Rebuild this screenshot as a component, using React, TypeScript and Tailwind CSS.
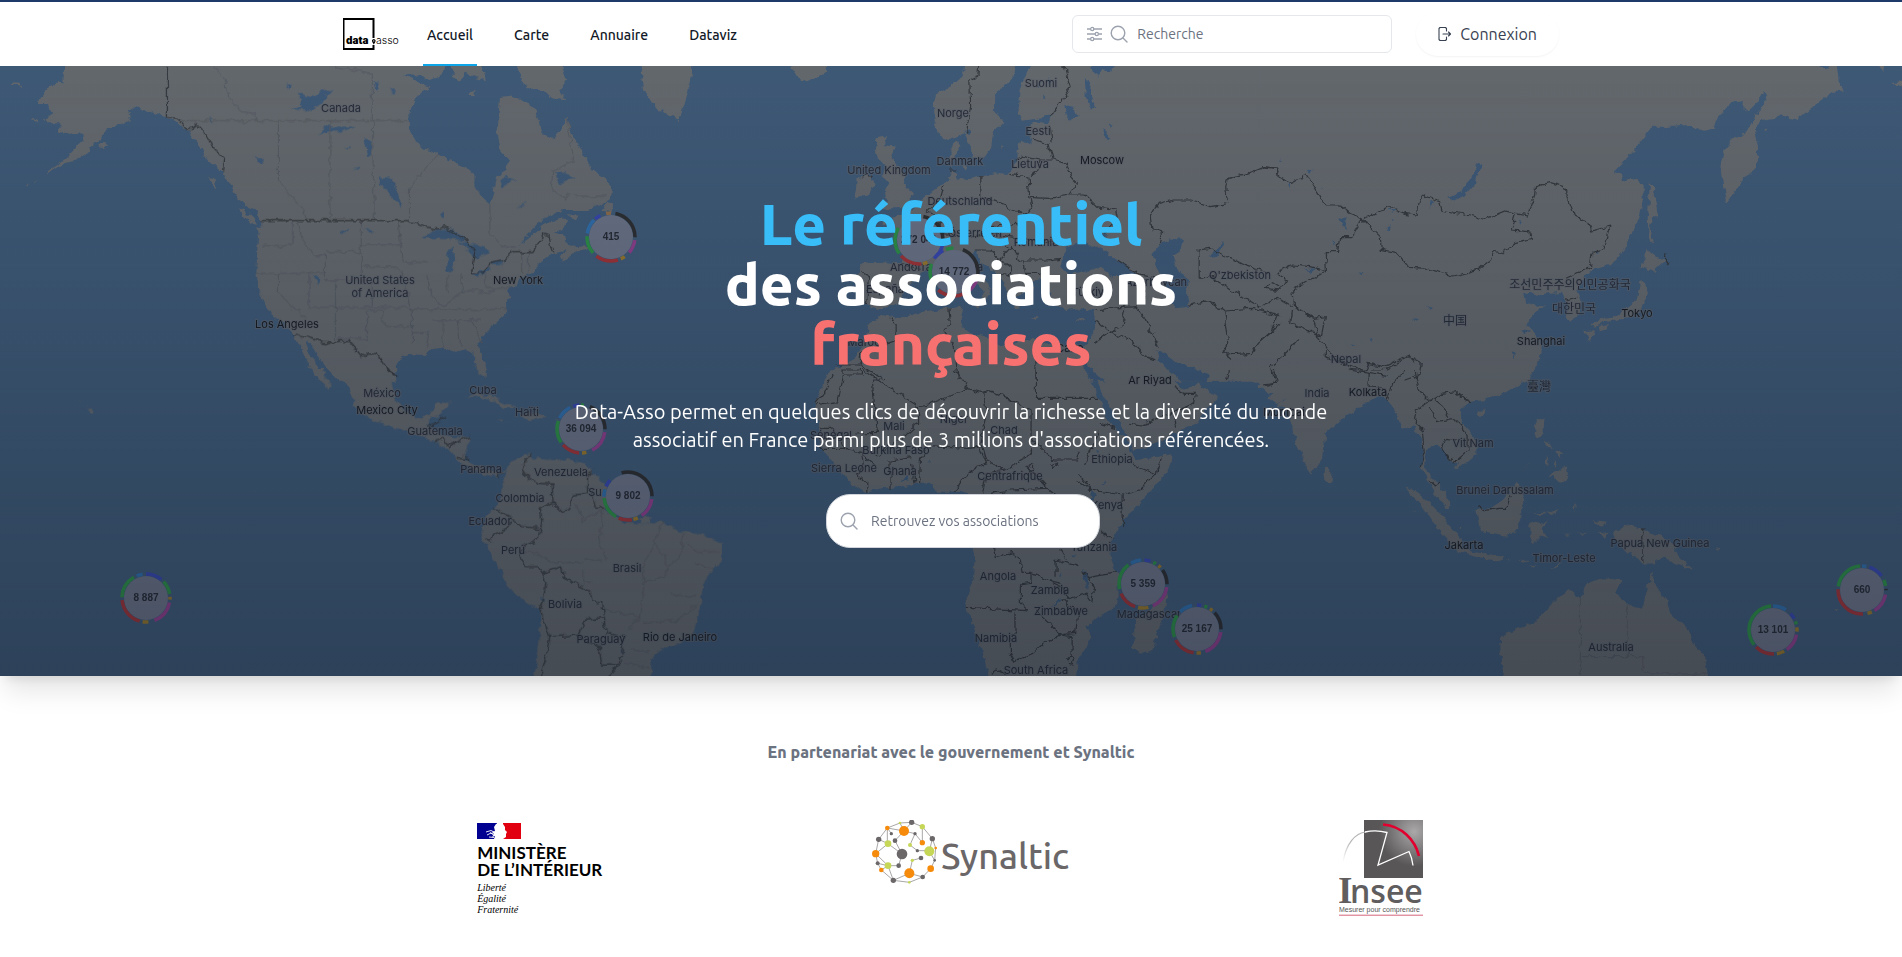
const HALO = "#5d636b";

type Tile = {
  transform: string;
  land: string;
  water?: string;
  borders: string;
  regions?: string;
};

const tiles: Tile[] = [
  {
    // North America
    transform: "translate(0 60) scale(.408163 .333333)",
    land:
      "M158,0 L155,70 140,68 118,85 98,110 93,135 115,135 128,160 105,178 120,190 145,190 148,218 165,215 182,222 200,213 205,240 185,265 165,290 150,305 135,318 115,335 108,340 118,338 140,320 160,310 190,300 215,280 222,260 250,235 262,205 285,195 300,195 318,180 315,155 330,140 345,145 370,155 400,172 420,178 440,195 460,215 475,240 495,270 510,300 530,320 545,335 550,350 560,370 575,400 590,425 610,445 630,455 640,480 640,500 628,500 632,530 630,580 628,640 635,690 650,730 670,770 700,800 720,825 735,860 750,900 765,930 780,965 L797,965 785,935 770,905 755,870 748,840 760,850 775,880 800,920 815,945 830,965 L970,965 965,930 975,900 1000,882 1040,885 1060,868 1090,860 1115,880 1140,868 1160,880 1165,905 1175,935 1190,955 1190,910 1178,880 1172,850 1190,820 1215,790 1240,760 1240,730 1250,715 1245,690 1265,680 1275,650 1305,640 1320,610 1350,580 1385,570 1375,590 1380,605 1400,585 1425,572 1440,565 1440,555 1400,560 1385,545 1380,520 1360,515 1385,500 1390,480 1370,478 1330,495 1300,530 1270,560 1290,530 1320,490 1350,465 1380,450 1440,450 1480,430 1500,410 1502,380 1480,350 1450,330 1420,260 1400,220 1390,175 1375,200 1360,230 1340,235 1325,215 1320,180 1310,150 1290,125 1250,108 1225,110 1222,160 1218,230 1225,270 1245,300 1240,330 1215,350 1210,390 1200,430 1180,410 1165,380 1165,345 1140,320 1100,300 1060,270 1030,265 1005,215 1003,160 1015,120 1035,95 1055,80 1030,70 990,45 1010,40 1050,60 1080,50 1100,0 Z M1255,0 L1275,50 1300,90 1330,90 1350,115 1385,120 1370,90 1390,60 1370,0 Z M1105,0 L1110,50 1125,65 1140,40 1165,55 1190,60 1180,0Z M1145,105 L1155,92 1165,90 1160,105Z M1475,448 L1490,425 1502,430 1495,455Z M1390,462 L1420,468 1410,478Z M20,65 L45,68 52,82 38,75Z M240,258 L255,245 265,258 250,268Z M80,178 L95,178 90,187Z M62,375 L70,370 68,378Z M82,362 L88,358 86,366Z M515,352 L525,355 530,385 520,375Z M583,445 L600,450 622,478 630,495 615,490 595,465Z",
    water:
      "M1035,535 L1060,510 1100,505 1130,525 1140,545 1110,540 1070,535Z M1097,570 L1112,560 1115,600 1105,640 1092,630Z M1120,545 L1150,550 1190,560 1200,580 1175,590 1165,600 1150,570Z M1155,645 L1180,630 1205,618 1200,632 1170,650Z M1200,605 L1240,598 1230,612 1205,612Z M930,350 L960,355 975,400 985,445 965,420 945,385 930,375Z M715,150 L740,140 730,98 760,115 785,90 820,90 800,110 785,130 750,155Z M700,65 L715,75 710,88Z M780,225 L800,200 870,200 840,215 805,215Z M890,235 L910,240 912,280 900,290Z M915,70 L930,72 922,95Z M955,85 L970,95 965,105Z M620,285 L635,300 650,300 640,318 628,300Z M510,170 L525,190 515,185Z M845,265 L860,258 855,265Z M870,325 L882,320 876,332Z M768,648 L782,655 780,675Z M1225,365 L1240,350 1262,362 1245,370 1232,382Z M1268,445 L1288,425 1280,440Z M1075,460 L1090,452 1088,475Z M1360,340 L1380,335 1410,352 1385,365 1370,370Z M835,518 L852,505 855,510 838,522Z M890,505 L920,515 905,517Z M1005,310 L1012,330Z",
    borders:
      "M410,0 V172 L437,175 460,215 482,190 500,215 525,265 550,295 548,335 M640,482 H1000 L1010,490 1040,500 1070,507 1090,500 1140,540 1165,575 1162,600 1155,640 1180,640 1205,605 1235,600 1258,575 1305,575 1325,540 1330,520 1345,525 1350,560 1357,573 M718,826 L740,826 795,848 830,848 835,842 855,842 880,880 895,890 905,878 925,882 945,920 955,938 970,945",
    regions:
      "M440,182 H1003 M682,182 V365 L745,450 750,480 M808,182 V482 M912,40 V182 L917,482 M820,20 L912,40 M525,18 L550,50 560,110 590,155 625,160 630,182 M1075,280 L1003,385 V482 M1200,430 V520 L1225,555 1265,562 M718,482 V550 L690,560 640,555 M730,482 L740,540 770,585 797,585 V660 M797,575 H885 M885,482 V640 M885,555 H980 M975,482 L985,605 1045,608 M628,640 H797 M682,640 V700 L748,775 M757,640 V740 M757,742 H1005 M822,660 V842 M797,660 H912 V740 M898,750 V835 H830 M898,750 H938 V795 L1005,802 M885,617 L975,622 985,640 M1005,750 H1070 L1240,748 M1010,818 H1050 L1045,860 M1060,780 H1175 M1085,782 V862 M1120,782 L1128,855 M1155,780 L1180,850 M1097,645 V700 M1132,645 V700 M1190,640 V685 H1255 M985,640 L1010,750 1010,850 M1045,640 L1055,700 1085,740 M1355,330 L1350,390 1385,415 1395,400 M1403,408 H1487 M1390,180 L1400,260 1405,300 1355,335 M1278,575 V640 M1295,575 V640 M1130,700 L1160,690 1190,700 1215,690 M1085,740 L1130,700",
  },
  {
    // Central and South America
    transform: "translate(0 370) scale(.471939 .333333)",
    land:
      "M707,-5 L735,50 750,90 755,125 790,150 830,170 865,185 895,200 930,220 955,245 970,275 990,290 1005,300 1030,318 1055,320 1075,300 1065,330 1065,360 1060,395 1045,420 1030,440 1020,500 1040,560 1060,600 1075,650 1100,680 1145,720 1145,780 1140,850 1130,935 L1380,935 1380,870 1395,840 1440,820 1470,790 1478,740 1485,700 1490,640 1510,600 1530,570 1530,520 1510,510 1480,490 1440,480 1420,470 1400,455 1370,465 1350,460 1320,455 1280,420 1290,400 1285,345 1250,300 1240,280 1200,270 1170,270 1130,265 1125,250 1100,265 1085,275 1070,300 1055,310 1030,295 1000,280 985,265 990,235 995,200 960,205 930,190 920,180 905,165 915,140 930,135 950,110 955,95 925,95 912,135 880,145 855,120 840,90 830,40 840,-5 Z M665,-5 L680,30 700,62 705,55 690,20 685,-5Z M985,78 L1010,70 1050,85 1095,112 1070,115 1050,95 1010,80Z M1100,130 L1130,128 1160,142 1120,150Z M1055,146 L1068,147 1062,151Z M1175,146 L1190,148 1180,150Z M1012,-5 L1030,-5 1025,25 1015,15Z M190,118 L200,122 197,131 190,130Z M185,103 l4,2 -2,3Z M168,90 l3,2 -2,2Z M1355,445 L1380,442 1375,462 1360,465Z",
    water: "M1140,682 L1156,690 1150,698Z M1314,838 L1320,840 1318,852Z",
    borders:
      "M818,-5 L835,15 842,15 M905,165 L930,160 932,140 945,145 M920,215 L940,205 950,225 995,200 M950,235 L968,215 M968,262 L992,265 M1055,320 L1062,310 M1127,250 L1105,290 1120,325 1140,340 1170,342 1172,400 1190,425 1205,415 1215,375 1245,370 1245,320 1255,305 M1172,400 L1145,415 1148,450 1143,505 M1045,415 L1080,440 1105,470 1143,475 M1085,455 L1070,480 1045,495 1040,515 1028,505 M1143,505 L1110,530 1100,560 1115,590 1140,590 1150,610 1190,590 M1150,610 L1157,640 1150,700 1145,720 1165,800 1155,870 1145,918 M1190,590 L1195,625 1250,660 1255,695 1275,700 1280,745 1240,750 1225,795 1170,800 M1225,800 L1270,835 1275,885 1305,885 1320,855 M1280,745 L1285,790 1320,800 1318,850 M1320,870 L1290,918 M1255,360 L1260,410 1280,415",
    regions:
      "M1220,400 L1235,455 1260,430 1275,420 1270,520 1285,570 M1110,540 L1180,580 1230,575 M1235,600 V640 H1255 M1275,570 H1235 M1385,520 L1360,600 1365,640 M1405,455 L1385,520 1410,560 1410,620 1365,640 M1450,490 L1440,560 1410,600 M1365,640 L1355,740 1280,720 M1355,740 L1330,780 M1480,545 H1525 M1475,580 L1510,600 M1455,520 L1490,560 M1365,760 L1440,750 1475,700 M1420,670 L1475,680 M1335,840 L1380,845 M1325,880 L1375,890",
  },
  {
    // Europe, North Africa and western Asia
    transform: "translate(640 60) scale(.408163 .333333)",
    land:
      "M0,0 L130,0 125,60 110,130 95,183 70,165 35,140 10,90Z M370,0 L465,0 455,38 410,68 385,50 375,30Z M925,0 L915,50 890,75 870,110 870,150 890,190 865,220 860,265 845,290 820,295 805,250 795,215 785,230 755,240 730,225 722,190 720,130 725,100 760,80 790,50 800,0 Z M960,0 L930,90 925,150 935,182 985,175 1010,165 1000,190 970,185 950,195 955,230 960,255 935,240 925,270 925,300 900,345 870,340 835,345 800,360 775,355 765,330 770,290 785,260 775,240 760,270 762,300 765,330 755,360 735,375 710,400 690,420 665,450 640,465 600,480 590,490 620,500 640,530 650,570 640,610 580,605 540,610 535,650 530,700 550,730 580,750 610,740 640,715 650,685 680,650 700,630 735,612 765,605 790,625 815,660 845,690 840,710 820,735 830,745 850,715 860,700 855,680 870,690 840,660 815,620 805,590 825,570 830,600 850,620 880,650 895,680 905,715 920,745 930,740 925,710 945,690 965,690 960,665 975,655 1000,670 1005,700 1010,730 1040,750 1080,745 1110,750 1115,780 1110,820 1095,850 1080,870 1050,860 1000,855 960,840 930,835 915,860 880,855 850,830 810,820 790,800 785,770 790,740 750,745 690,755 640,775 590,765 560,800 545,860 520,900 490,920 470,940 455,965 L1580,965 1580,0Z M580,235 L605,228 600,255 625,260 615,290 640,330 650,375 668,400 660,430 630,445 590,445 605,420 600,400 610,370 595,350 600,320 585,300 575,270Z M530,355 L565,345 572,375 560,405 525,418 530,385Z M745,650 L755,650 752,700 742,700Z M955,772 L980,772 970,780Z M1065,778 L1090,776 1080,785Z M790,312 L802,318 798,330Z M885,255 L892,262 886,268Z",
    water:
      "M1035,590 L1050,560 1085,545 1110,560 1130,560 1150,590 1185,610 1215,640 1210,655 1160,650 1120,620 1080,640 1050,645 1030,620 Z M1115,535 L1145,515 1142,535 1125,545Z M1255,580 L1275,550 1300,535 1330,540 1325,570 1305,585 1310,610 1320,635 1345,660 1340,700 1345,740 1310,745 1290,720 1295,690 1275,650 1262,610Z M1395,595 L1415,560 1430,545 1425,560 1412,590Z M1085,880 L1100,920 1140,965 1110,965 1090,930Z M1265,870 L1290,885 1310,905 1360,925 1395,945 1390,965 1330,965 1300,940 1275,905Z M1040,135 L1062,140 1072,170 1058,182 1042,160Z M1090,55 L1105,70 1102,100 1115,140 1105,152 1092,110Z M1100,0 L1170,0 1150,35 1135,30 1125,50 1110,38Z M1130,208 L1145,215 1150,238 1138,235Z M975,65 L982,80 976,88Z M1000,50 L1008,70 1002,75Z M985,100 L992,110 986,118Z M1150,190 l8,5 -5,5Z M795,210 L808,205 805,225Z",
    borders:
      "M830,0 L828,50 808,60 810,140 800,215 M1035,0 L1055,85 1005,170 M960,240 L1000,255 1010,300 M1005,200 L1010,250 M915,300 L940,290 980,300 1010,300 1045,310 1055,350 1070,370 1050,405 1000,415 955,412 950,350 905,343 M980,300 L975,330 955,350 M835,345 L835,410 870,425 920,450 950,465 M955,412 L960,440 945,465 M1050,405 L1090,405 1120,440 1165,450 1170,480 1140,520 M745,375 L735,420 705,455 L740,480 735,520 700,560 M740,520 L800,530 860,520 930,535 1010,545 M860,500 L920,490 940,520 M820,570 L860,570 880,600 910,620 900,650 M880,600 L910,560 930,600 1000,600 1030,595 M940,600 L945,640 1000,640 M870,540 L900,560 M890,640 L930,655 M545,640 L560,650 555,735 M640,610 L690,625 M545,352 L555,345 568,352 M760,330 H775 M610,775 L630,790 630,840 560,870 540,880 V915 H480 M495,945 V930 H540 M540,915 L600,960 M757,745 L760,790 745,815 770,860 780,960 M970,860 V960 M1115,750 L1150,745 1215,740 1235,770 1270,860 M1115,780 L1150,815 1110,850 M1150,815 L1200,840 1240,890 1265,900 M1190,745 L1180,800 1150,815 M1215,640 L1240,680 1230,730 M1345,735 L1390,725 1430,750 1435,800 1440,850 1430,880 1450,900 M1435,885 L1500,880 1515,850 1568,790 M1430,750 L1500,745 1568,770 M1568,350 L1560,325 1530,320 1490,340 1440,355 1435,380 1440,430 1400,440 1350,420 1310,420 1270,430 1250,470 1255,510 1280,520 1275,550 M1370,655 V570 L1395,565 1440,590 1490,620 1540,640 M1370,655 L1400,650 1450,690 1520,740 M1170,600 L1220,640 1300,660 M1530,680 L1550,665 1568,680 M1540,690 H1568",
  },
  {
    // Eastern Asia
    transform: "translate(1262 60) scale(.408163 .333333)",
    land:
      "M-5,0 L1410,0 1415,60 1425,95 1400,95 1370,120 1330,160 1310,180 1280,165 1250,175 1225,180 1205,210 1215,260 1215,295 1200,340 1180,350 1170,380 1155,400 1137,430 1130,380 1123,320 1130,280 1145,245 1180,225 1200,190 1215,155 1240,105 1230,95 1218,125 1190,158 1180,150 1180,120 1150,125 1130,155 1105,190 1110,208 1080,212 1040,195 1010,200 960,200 940,220 915,265 890,300 862,335 880,345 885,365 910,355 935,375 935,410 925,470 900,535 880,580 850,615 825,620 800,635 785,660 770,690 780,720 775,770 755,785 745,770 750,740 740,715 735,695 700,700 670,705 640,700 645,725 665,735 695,740 670,755 655,780 650,795 670,825 685,850 685,875 675,910 650,965 L-5,965Z M950,370 L960,380 965,430 972,475 955,475 950,505 962,545 948,545 945,480 948,420Z M945,570 L965,590 990,600 960,635 930,620 925,635 935,600Z M930,660 L942,670 945,705 930,740 920,760 905,770 880,775 845,785 815,800 805,795 830,775 870,768 895,745 920,720 925,690Z M790,810 L815,808 815,825 800,848Z M825,800 L850,795 845,808 828,815Z M1500,0 L1525,0 1522,34Z M1540,65 L1568,65 1568,82 1555,72Z M1228,212 l8,-4 -4,12Z",
    water:
      "M530,305 L538,325 520,370 495,405 470,422 457,415 490,395 515,350Z M110,330 L125,328 118,342Z M190,480 L205,468 200,490 210,510 195,500Z M105,628 L130,625 122,637Z M410,420 L418,422 414,445Z M310,450 l14,0 -4,8Z M625,488 L638,478 630,494Z M305,505 l12,-6 -8,14Z M318,474 l8,3 -6,6Z M170,540 L182,552 175,555Z M405,738 L418,745 412,750Z M238,637 l8,3 -5,6Z M370,778 l12,2 -6,5Z M280,665 l6,10Z M820,572 l8,6 -8,4Z M638,810 L655,815 645,822Z M262,838 l10,4 -6,4Z M220,853 l8,3 -6,5Z M612,870 L622,880 616,895Z M62,372 l8,0 -4,8Z M45,295 l5,3 -4,5Z M145,380 l7,3 -5,5Z M1365,20 L1395,18 1380,28Z",
    borders:
      "M0,320 L35,325 40,350 75,370 110,345 130,385 155,435 190,435 215,460 245,478 220,530 190,530 185,575 155,575 158,635 110,665 75,690 80,740 130,775 155,770 145,830 70,790 75,750 M245,478 L310,440 350,460 380,465 385,425 395,405 435,425 440,450 510,465 545,478 595,453 650,468 668,405 670,380 705,368 740,380 765,465 800,490 808,513 852,498 835,570 808,580 805,620 745,655 M245,478 L290,530 292,568 330,578 362,625 410,628 470,648 530,628 560,600 565,575 590,578 620,548 660,535 655,515 610,510 620,465 M745,720 L770,712 M80,740 L100,755 125,775 138,830 160,870 200,910 250,935 260,910 300,920 360,885 375,910 M155,870 L155,890 250,935 M265,930 L300,930 360,890 390,910 385,945 350,960 M90,835 L60,880 20,920 30,960 M0,735 L40,715 75,740 M35,640 L75,615 120,620 155,632 M35,640 L60,660 45,690 5,685 M40,760 L20,820 0,840 M990,578 L988,600 998,615",
  },
  {
    // Africa and the Arabian peninsula
    transform: "translate(740 370) scale(.357143 .333333)",
    land:
      "M255,-5 L230,50 210,100 220,150 222,200 230,235 270,290 310,340 350,368 400,358 450,350 500,340 530,335 550,365 590,365 620,362 640,372 650,420 640,480 650,530 660,570 655,620 635,680 635,720 660,780 680,850 700,935 L940,935 945,880 970,830 985,800 970,770 1000,740 1050,710 1060,680 1060,620 1040,570 1035,520 1060,470 1100,420 1150,360 1190,310 1210,270 1210,250 1150,265 1110,270 1095,245 1070,200 1030,150 1010,100 990,50 960,-5Z M978,-5 L1005,50 1045,130 1075,180 1098,240 1130,235 1180,210 1230,180 1280,160 1310,110 1338,80 1310,60 1285,40 1250,60 1220,40 1195,-5Z M1225,-5 L1255,22 1285,30 1295,15 1305,35 1340,35 1390,30 1440,25 1480,70 1530,90 1500,110 1530,115 1580,150 1580,-5Z M1195,670 L1190,720 1170,790 1155,840 1125,852 1100,830 1105,780 1110,750 1150,720 1180,680Z",
    water:
      "M985,360 L998,375 990,395 978,380Z M965,595 L975,640 972,660 962,625Z M870,710 L890,690 905,688 880,708Z M1000,240 l10,2 -6,8Z M1015,340 l6,-8 2,6Z M455,325 L468,318 475,335 462,332Z M526,270 l6,0 -3,8Z M895,610 l8,2 -4,8Z M930,555 l8,4 -4,4Z",
    borders:
      "M340,0 V15 H290 L275,95 210,105 M260,10 L240,60 210,100 M370,30 L385,190 320,192 M370,30 H395 M345,0 L500,110 525,105 640,55 600,0 M500,110 V160 L460,200 M640,55 L680,70 700,62 815,120 V200 M830,0 V85 H1005 M525,230 L640,235 680,230 M680,70 L690,130 670,230 690,280 650,300 620,330 600,365 M680,230 L690,270 740,300 800,265 830,220 815,200 M830,220 L880,270 940,270 950,245 M680,365 L690,310 740,300 M700,370 L760,360 860,355 800,285 M860,355 L880,372 M950,310 L985,360 1070,375 1120,360 1165,312 1180,260 M985,360 L940,330 M1070,375 V440 L1075,465 M1100,285 L1165,312 M1010,480 L1040,510 M1005,160 L1050,175 M965,285 L980,250 1005,180 M220,175 H250 L270,190 290,235 340,250 380,285 M222,235 H300 M222,205 H265 M340,250 L345,280 330,320 M355,368 V340 L325,310 M420,360 V270 L480,260 M490,340 L480,275 M503,340 L505,270 525,230 M380,260 L420,230 460,200 M710,535 L715,560 760,548 785,570 790,610 815,610 860,630 900,640 M815,610 V640 L785,645 V700 L810,725 M635,712 L810,722 M770,730 V790 L757,800 V850 L770,875 820,850 850,820 895,795 930,800 V860 M895,795 L870,765 830,725 M895,795 L940,790 945,730 905,690 965,670 985,700 990,650 960,600 M860,630 L900,650 920,690 M885,570 L950,590 M885,570 V620 M975,620 L1055,605 M895,535 L915,570 M915,870 L925,858 937,868 930,882 918,880 M705,910 L720,900 740,912 M1215,50 L1245,70 1275,70 1270,100 1210,130 1220,170 M1090,160 L1120,165 1210,130 M1365,30 L1370,0 M1470,50 L1500,40 1490,0 M810,290 L820,285 825,298 812,300Z M870,285 L885,278 890,290 875,292Z",
  },
  {
    // Southern Asia and Oceania
    transform: "translate(1262 370) scale(.408163 .333333)",
    land:
      "M-10,-5 L-10,50 25,70 15,85 40,105 60,85 65,130 80,200 100,270 120,307 135,290 150,265 155,190 190,150 240,110 280,80 300,80 320,110 335,150 345,180 370,165 385,190 400,240 390,290 400,320 415,345 425,375 450,410 460,415 450,370 430,340 405,310 400,280 405,235 425,225 445,240 460,270 480,280 475,297 510,270 525,255 525,220 510,185 485,155 485,120 510,95 545,90 590,72 620,50 650,35 660,-5Z M155,290 L172,310 170,340 152,338Z M350,352 L385,370 420,410 450,450 485,500 490,540 460,520 430,480 405,430 370,380Z M470,525 L520,545 590,560 590,570 530,562 480,545Z M600,570 L612,570 608,575Z M620,572 L655,572 645,578Z M658,585 L670,590 664,596Z M710,598 L735,580 728,592Z M525,420 L560,415 590,390 625,335 640,360 645,400 630,440 630,480 600,497 545,485 530,455Z M665,430 L700,428 725,418 720,430 680,435Z M655,455 L680,462 700,450 685,475 700,505 680,495 665,522 655,490Z M675,145 L692,145 690,185 680,210 665,190Z M745,290 L748,325 730,342 715,320 700,320 730,300Z M690,215 L705,218 712,235 700,228Z M720,240 L735,250 730,262Z M695,260 L702,275 697,290Z M715,270 L722,285 715,290Z M640,298 L660,272 655,280Z M530,120 L548,118 540,140 525,140Z M860,490 L895,465 930,475 980,500 1020,530 1010,545 1055,600 1020,585 985,560 960,580 930,582 905,545 895,555 880,520 865,510Z M810,450 L845,455 830,470Z M765,410 L772,402 768,430Z M740,490 L755,492 745,494Z M775,488 L800,488 790,492Z M825,485 L850,490 835,500Z M583,800 L600,790 670,755 700,715 725,685 755,660 780,685 795,640 835,625 880,630 865,670 900,705 930,720 945,660 953,607 970,660 990,690 1000,730 1040,775 1055,820 1085,860 1095,935 L598,935 585,850Z M1112,528 L1124,542 1118,540Z M1400,720 l14,-3 -4,9 -8,0Z M375,418 l5,4 -4,2Z M480,465 l8,10 -4,4Z M662,40 L672,38 668,62 660,68Z",
    borders:
      "M0,45 L38,40 30,0 M310,90 L320,40 350,0 M375,0 L385,60 410,95 380,120 375,160 395,180 400,250 390,290 M410,95 L440,70 475,65 495,85 510,95 M410,110 L430,155 470,145 485,165 505,200 505,240 470,275 M440,230 L450,205 480,210 M440,230 L445,250 465,270 M420,85 L445,110 460,140 M410,330 L425,348 435,335 M530,408 L545,422 580,415 600,415 608,375 M933,475 V580 M215,0 L260,10 V50 L300,55 M260,10 L310,20 M300,55 L310,95",
    regions: "M780,685 V918 M895,705 V860 M780,860 H933 V912 H1090",
  },
];

type Label = [text: string, x: number, y: number, strong?: boolean];

const labels: Label[] = [
  ["Canada", 341, 108], ["United States", 380, 280], ["of America", 380, 293],
  ["New York", 518, 280, true], ["Los Angeles", 287, 324, true],
  ["México", 382, 393], ["Mexico City", 387, 410, true], ["Cuba", 483, 390],
  ["Haïti", 527, 412], ["Guatemala", 435, 431], ["Panama", 481, 469],
  ["Venezuela", 561, 472], ["Su", 595, 492], ["Colombia", 520, 498],
  ["Ecuador", 490, 521], ["Perú", 513, 550], ["Brasil", 627, 568],
  ["Bolivia", 565, 604], ["Paraguay", 601, 639], ["Rio de Janeiro", 680, 637, true],
  ["Suomi", 1041, 83], ["Norge", 953, 113], ["Eesti", 1038, 131],
  ["Danmark", 960, 161], ["United Kingdom", 889, 170], ["Lietuva", 1030, 164],
  ["Moscow", 1102, 160, true], ["Deutschland", 960, 201], ["Österreich", 975, 233],
  ["România", 1036, 242], ["Andorra", 911, 267], ["Italia", 971, 267],
  ["España", 885, 289], ["Maroc", 864, 342], ["O'zbekiston", 1240, 275],
  ["Azerbaycan", 1156, 282], ["Türkiye", 1091, 292], ["Cairo", 1070, 348, true],
  ["Nepal", 1346, 359], ["Tokyo", 1637, 313, true], ["Shanghai", 1541, 341, true],
  ["Ar Riyad", 1150, 380, true], ["Mali", 894, 426], ["Niger", 954, 419],
  ["Chad", 1004, 430], ["Sénégal", 831, 435], ["Burkina Faso", 896, 450],
  ["Ethiopia", 1112, 459], ["Sierra Leone", 844, 468], ["Ghana", 900, 471],
  ["Centrafrique", 1010, 476], ["Kenya", 1107, 505], ["Tanzania", 1094, 547],
  ["Angola", 998, 576], ["Zambia", 1050, 590], ["Zimbabwe", 1061, 611],
  ["Madagascar", 1149, 614], ["Namibia", 996, 638], ["South Africa", 1036, 670],
  ["Mumbai", 1284, 412, true], ["India", 1317, 393], ["Kolkata", 1368, 392, true],
  ["Vit Nam", 1473, 443], ["Brunei Darussalam", 1505, 490],
  ["Jakarta", 1464, 545, true], ["Timor-Leste", 1564, 558],
  ["Papua New Guinea", 1660, 543], ["Australia", 1611, 647],
];

const eastAsianLabels: Label[] = [
  ["中国", 1455, 321],
  ["조선민주주의인민공화국", 1570, 285],
  ["대한민국", 1574, 309],
  ["臺灣", 1539, 387],
];

const DARK = "#2c2e31";
const PINK = "#8c3f8a";
const GOLD = "#94762c";
const RED = "#9c3338";
const GREEN = "#2c8c46";
const SKY = "#2f6ca8";
const NAVY = "#3646ac";

type Cluster = { count: string; x: number; y: number; ring: [number, number, string][] };

const clusters: Cluster[] = [
  { count: "272 041", x: 919, y: 240, ring: [[3, 24, DARK], [26, 36, NAVY], [44, 47, GOLD], [48, 63, RED], [65, 83, GREEN]] },
  { count: "14 772", x: 954, y: 272, ring: [[6, 27, DARK], [29, 40, PINK], [43, 61, RED], [64, 80, GREEN], [84, 92, NAVY], [94, 99, GREEN]] },
  { count: "415", x: 611, y: 237, ring: [[3, 25, DARK], [27, 36, PINK], [40, 43, GOLD], [45, 60, RED], [63, 75, GREEN], [77, 87, SKY], [88, 92, NAVY], [96, 100, "#8a6a4a"]] },
  { count: "36 094", x: 581, y: 429, ring: [[6, 25, DARK], [27, 42, PINK], [46, 49, GOLD], [51, 63, RED], [65, 80, GREEN], [82, 92, SKY], [94, 98, NAVY], [0, 2, GREEN]] },
  { count: "9 802", x: 628, y: 496, ring: [[-5, 25, DARK], [27, 40, PINK], [43, 46, GOLD], [47, 56, RED], [58, 73, GREEN], [74, 79, SKY], [81, 86, NAVY]] },
  { count: "8 887", x: 146, y: 598, ring: [[0, 11, NAVY], [13, 22, GREEN], [24, 26, GOLD], [28, 44, PINK], [48, 52, GOLD], [54, 73, RED], [75, 91, GREEN], [93, 97, SKY]] },
  { count: "5 359", x: 1143, y: 584, ring: [[1, 5, NAVY], [7, 9, GREEN], [11, 13, GOLD], [15, 25, DARK], [27, 43, PINK], [46, 53, GOLD], [55, 68, RED], [71, 89, GREEN], [91, 98, SKY]] },
  { count: "25 167", x: 1197, y: 629, ring: [[0, 3, NAVY], [5, 7, GREEN], [9, 11, GOLD], [13, 25, DARK], [27, 44, PINK], [47, 50, GOLD], [52, 67, RED], [69, 84, GREEN], [87, 96, SKY]] },
  { count: "13 101", x: 1773, y: 630, ring: [[0, 9, SKY], [13, 17, NAVY], [19, 21, GREEN], [23, 26, GOLD], [28, 40, PINK], [42, 47, GOLD], [49, 62, RED], [64, 98, GREEN]] },
  { count: "660", x: 1862, y: 590, ring: [[0, 3, SKY], [5, 15, NAVY], [18, 22, GREEN], [24, 25, DARK], [28, 41, PINK], [43, 46, GOLD], [49, 75, RED], [77, 98, GREEN]] },
];

const RING_RADIUS = 24;
const RING_STEP = (2 * Math.PI * RING_RADIUS) / 100;

function WorldMap() {
  return (
    <svg
      className="absolute inset-0 h-full w-full"
      viewBox="0 66 1902 610"
      preserveAspectRatio="xMidYMid slice"
      aria-hidden="true"
    >
      <defs>
        <filter id="coast" x="0" y="0" width="100%" height="100%">
          <feTurbulence type="fractalNoise" baseFrequency="0.14" numOctaves="2" seed="4" result="noise" />
          <feDisplacementMap in="SourceGraphic" in2="noise" scale="7" xChannelSelector="R" yChannelSelector="G" />
        </filter>
        <linearGradient id="shade" x1="0" y1="0" x2="0" y2="1">
          <stop offset="0" stopColor="#0e1624" stopOpacity="0" />
          <stop offset="1" stopColor="#0e1624" stopOpacity=".34" />
        </linearGradient>
      </defs>
      <rect x="0" y="66" width="1902" height="610" fill="#3e5976" />
      <g filter="url(#coast)">
        {tiles.map((tile) => (
          <path key={tile.transform} d={tile.land} transform={tile.transform} fill="#63686d" />
        ))}
        {tiles.map((tile) => (
          <g key={tile.transform} transform={tile.transform} fill="none">
            {tile.water && <path d={tile.water} fill="#3e5976" />}
            {tile.regions && (
              <path
                d={tile.regions}
                stroke="#565a62"
                strokeWidth="1"
                vectorEffect="non-scaling-stroke"
              />
            )}
            <path d={tile.borders} stroke="#34383d" strokeWidth="1.2" vectorEffect="non-scaling-stroke" />
          </g>
        ))}
      </g>
      <g textAnchor="middle" stroke={HALO} strokeWidth="2" strokeOpacity=".6" paintOrder="stroke">
        <g fontFamily="Inter, sans-serif" fontSize="11">
          {labels.map(([text, x, y, strong]) => (
            <text key={text} x={x} y={y + 4} fill={strong ? "#171b22" : "#262b38"}>
              {text}
            </text>
          ))}
        </g>
        <g fontFamily="'Noto Sans CJK KR', 'Noto Sans CJK TC', sans-serif" fontSize="12" fill="#262b38">
          {eastAsianLabels.map(([text, x, y]) => (
            <text key={text} x={x} y={y + 4}>
              {text}
            </text>
          ))}
        </g>
      </g>
      {clusters.map((c) => (
        <g key={c.count}>
          <circle cx={c.x} cy={c.y} r="22" fill="#687084" />
          <g fill="none" strokeWidth="3.500" transform={`rotate(-90 ${c.x} ${c.y})`}>
            {c.ring.map(([from, to, color]) => (
              <circle
                key={from}
                cx={c.x}
                cy={c.y}
                r={RING_RADIUS}
                stroke={color}
                strokeDasharray={`${(to - from) * RING_STEP} ${(100 - to + from) * RING_STEP}`}
                strokeDashoffset={-from * RING_STEP}
              />
            ))}
          </g>
          <text
            x={c.x}
            y={c.y + 3}
            fill="#252a33"
            fontFamily="Liberation Sans, sans-serif"
            fontSize="10"
            fontWeight="700"
            textAnchor="middle"
          >
            {c.count}
          </text>
        </g>
      ))}
      <rect x="0" y="66" width="1902" height="610" fill="url(#shade)" />
    </svg>
  );
}

function SearchIcon({ className }: { className: string }) {
  return (
    <svg className={className} viewBox="0 0 20 20" fill="none" stroke="currentColor" strokeWidth="1.4" aria-hidden="true">
      <circle cx="9" cy="9" r="6.8" />
      <path d="M14 14l4 4" strokeLinecap="round" />
    </svg>
  );
}

function SlidersIcon({ className }: { className: string }) {
  return (
    <svg className={className} viewBox="0 0 20 20" fill="none" stroke="currentColor" strokeWidth="1.3" aria-hidden="true">
      <path d="M2 5h3.500M9 5h8M2 10h8M13.500 10h3.500M2 15h3.500M9 15h8" />
      <circle cx="7.200" cy="5" r="1.600" />
      <circle cx="11.800" cy="10" r="1.600" />
      <circle cx="7.200" cy="15" r="1.600" />
    </svg>
  );
}

function LoginIcon({ className }: { className: string }) {
  return (
    <svg className={className} viewBox="0 0 14 14" fill="none" stroke="currentColor" strokeWidth="1.100" strokeLinecap="round" strokeLinejoin="round" aria-hidden="true">
      <path d="M8.500 4V1.500L7.500.500H2L1 1.500v11l1 1h5.500l1-1V10M5 7h7.500M10.500 5l2 2-2 2" />
    </svg>
  );
}

function BrandLogo() {
  return (
    <svg className="h-8 w-15" viewBox="0 0 60 32" role="img" aria-label="data asso">
      <path d="M30 20V1H0v30h30v-4" fill="none" stroke="#000" strokeWidth="2" transform="translate(.5)" />
      <g fontFamily="Inter, sans-serif">
        <text x="3" y="26" fontSize="10" fontWeight="900">data</text>
        <text x="33" y="26" fontSize="10.500" fontWeight="300">asso</text>
      </g>
      <path d="M30.800 26.400l-1.500-2.500a1.800 1.800 0 1 1 3 0z" />
      <circle cx="30.800" cy="22.900" r=".6" fill="#fff" />
    </svg>
  );
}

function Header() {
  const item = "flex items-center border-b-2 px-1 pt-1 text-sm font-medium text-[#111827]";
  return (
    <header className="border-t-2 border-[#1e3a68] bg-white">
      <div className="mx-auto flex h-16 max-w-7xl items-center justify-between px-8">
        <div className="flex h-full items-center gap-5">
          <a href="#accueil">
            <BrandLogo />
          </a>
          <nav className="flex h-full gap-[33px]">
            <a href="#accueil" className={`${item} border-[#0ea5e9]`}>Accueil</a>
            <a href="#carte" className={`${item} border-transparent`}>Carte</a>
            <a href="#annuaire" className={`${item} border-transparent`}>Annuaire</a>
            <a href="#dataviz" className={`${item} border-transparent`}>Dataviz</a>
          </nav>
        </div>
        <div className="flex items-center gap-6">
          <label className="flex h-[38px] w-80 items-center gap-1 rounded-md border border-[#e5e7eb] px-3 text-[#9ca3af]">
            <SlidersIcon className="size-5" />
            <SearchIcon className="size-5" />
            <input
              type="search"
              aria-label="Recherche"
              placeholder="Recherche"
              className="ml-1 min-w-0 flex-1 text-sm text-[#374151] outline-none placeholder:text-[#6b7280]"
            />
          </label>
          <button type="button" className="flex h-11 items-center gap-2 rounded-full px-[22px] text-base text-[#374151] shadow-xs">
            <LoginIcon className="size-[14px]" />
            Connexion
          </button>
        </div>
      </div>
    </header>
  );
}

function Hero() {
  return (
    <section className="relative shadow-xl">
      <WorldMap />
      <div className="relative flex flex-col items-center px-8 pt-32 pb-32 text-center">
        <h1 className="text-[58px] leading-[60px] font-extrabold text-white">
          <span className="block text-[#38bdf8]">Le référentiel</span>
          <span className="block">des associations</span>
          <span className="block text-[#f87171]">françaises</span>
        </h1>
        <p className="mt-6 max-w-[780px] text-xl leading-7 text-white">
          Data-Asso permet en quelques clics de découvrir la richesse et la diversité du monde associatif en France parmi
          plus de 3 millions d'associations référencées.
        </p>
        <label className="mt-10 ml-6 flex h-[54px] w-[274px] items-center gap-3 rounded-3xl border border-[#d1d5db] bg-white px-3 text-[#9ca3af]">
          <SearchIcon className="size-5 shrink-0" />
          <input
            type="search"
            aria-label="Retrouvez vos associations"
            placeholder="Retrouvez vos associations"
            className="min-w-0 flex-1 text-sm text-[#374151] outline-none placeholder:text-[#6b7280]"
          />
        </label>
      </div>
    </section>
  );
}

function MinistryLogo() {
  return (
    <div className="flex w-[127px] flex-col items-start text-black">
      <svg className="mt-[3px] h-4 w-11" viewBox="0 0 44 16" role="img" aria-label="Marianne">
        <path d="M0 0h20v16H0z" fill="#000091" />
        <path d="M26 0h18v16H26z" fill="#e1000f" />
        <path d="M19 1q4-2 7 0l2 3 0 3 2 2-1 2 0 3-3 2H17l1-3-3 1 2-3-2-2 3-1-1-4z" fill="#fff" />
        <path d="M9 9l5-1.500 4 2M10 12l4-2 4 2M12 14l5 .5M13 9.500l3 2" fill="none" stroke="#fff" strokeWidth=".9" />
      </svg>
      <div className="mt-[5px] font-['Lato',sans-serif] text-[17px] leading-[17px] font-bold whitespace-nowrap">
        MINISTÈRE
        <br />
        DE L’INTÉRIEUR
      </div>
      <div className="mt-1 font-['Liberation_Serif',serif] text-[10px] leading-[11px] italic">
        Liberté
        <br />
        Égalité
        <br />
        Fraternité
      </div>
    </div>
  );
}

const GREY = "#6b6768";
const ORANGE = "#f68b0b";
const LIME = "#c6d657";

const nodes: [number, number, number, string][] = [
  [91, 84, 7, ORANGE], [129, 69, 4, LIME], [164, 67, 8, GREY], [196, 80, 8, LIME], [226, 116, 8, GREY],
  [236, 144, 4, ORANGE], [217, 154, 15, LIME], [233, 181, 4, GREY], [221, 206, 10, ORANGE], [197, 231, 7, GREY],
  [157, 247, 4, LIME], [109, 241, 8, GREY], [73, 210, 7, ORANGE], [62, 190, 6, GREY], [56, 161, 11, ORANGE],
  [65, 118, 8, GREY], [93, 131, 10, LIME], [141, 93, 15, ORANGE], [103, 101, 5, GREY], [114, 122, 7, GREY],
  [135, 162, 16, GREY], [174, 101, 5, GREY], [196, 128, 8, ORANGE], [159, 135, 6, LIME], [181, 152, 5, GREY],
  [93, 197, 10, LIME], [125, 197, 7, GREY], [166, 181, 5, LIME], [192, 174, 7, GREY], [157, 220, 15, ORANGE],
];

function SynalticLogo() {
  return (
    <svg className="h-16 w-[198px]" viewBox="0 0 198 64" role="img" aria-label="Synaltic">
      <g transform="translate(-15 -20) scale(.333333)">
        <path
          d="M91,84L129,69 164,67 196,80 226,116 236,144 233,181 221,206 197,231 157,247 109,241 73,210 62,190 56,161 65,118ZM91,84V131M91,84L103,101M91,84L141,93 129,69M164,67L141,93 114,122 135,162M93,131L135,162 125,197 93,197 56,161M93,131L65,118M174,101L196,128V80M141,93L174,101 159,135 181,152H217M226,116L217,154 233,181M166,181L192,174M166,181L157,220 197,231M157,220L109,241 93,197 73,210M56,161L93,131M62,190L93,197"
          fill="none"
          stroke="#8a8687"
          strokeWidth="2.200"
        />
        {nodes.map(([cx, cy, r, fill]) => (
          <circle key={`${cx}-${cy}`} cx={cx} cy={cy} r={r} fill={fill} />
        ))}
      </g>
      <text x="69" y="49" fill={GREY} fontFamily="Ubuntu, Lato, sans-serif" fontSize="36" fontWeight="500">
        Synaltic
      </text>
    </svg>
  );
}

function InseeLogo() {
  return (
    <svg className="h-24 w-[86px]" viewBox="0 0 86 96" role="img" aria-label="Insee, mesurer pour comprendre">
      <defs>
        <radialGradient id="glow" cx=".85" cy=".2" r=".6">
          <stop offset="0" stopColor="#aaa8a8" />
          <stop offset="1" stopColor="#585657" />
        </radialGradient>
        <linearGradient id="fade" x1="0" y1="1" x2="1" y2="0">
          <stop offset="0" stopColor="#fff" />
          <stop offset=".5" stopColor="#b5b3b3" />
        </linearGradient>
      </defs>
      <path d="M25 0h59v58H25z" fill="url(#glow)" />
      <path d="M4 42C7 24 16 13 27 12" fill="none" stroke="url(#fade)" strokeWidth="1.200" />
      <path d="M26 12q11-2.500 22 .5L39 45l31-13.500q3 6 4 14" fill="none" stroke="#fff" strokeWidth="1.300" />
      <path d="M44 4.500C63 6 76 20 80 36" fill="none" stroke="#e2002f" strokeWidth="2.600" />
      <text x="-1" y="83" fill="#5f5d5e" fontFamily="Liberation Serif, serif" fontSize="37" fontWeight="700">I</text>
      <text x="11" y="83" fill="#5f5d5e" fontFamily="Open Sans, sans-serif" fontSize="32" fontWeight="600">nsee</text>
      <text x="0" y="92" fill="#555" fontFamily="Liberation Sans, sans-serif" fontSize="7">Mesurer pour comprendre</text>
      <path d="M0 95.200h84" stroke="#d6657c" strokeWidth="1" />
    </svg>
  );
}

export default function App() {
  return (
    <div className="min-h-screen bg-white font-['Ubuntu','Noto_Sans',sans-serif]">
      <Header />
      <main>
        <Hero />
        <section className="mx-auto max-w-7xl px-8 pt-16 pb-10">
          <h2 className="text-center text-base font-extrabold text-[#6b7280]">En partenariat avec le gouvernement et Synaltic</h2>
          <div className="mt-14 flex items-start justify-around">
            <MinistryLogo />
            <SynalticLogo />
            <InseeLogo />
          </div>
        </section>
      </main>
    </div>
  );
}
